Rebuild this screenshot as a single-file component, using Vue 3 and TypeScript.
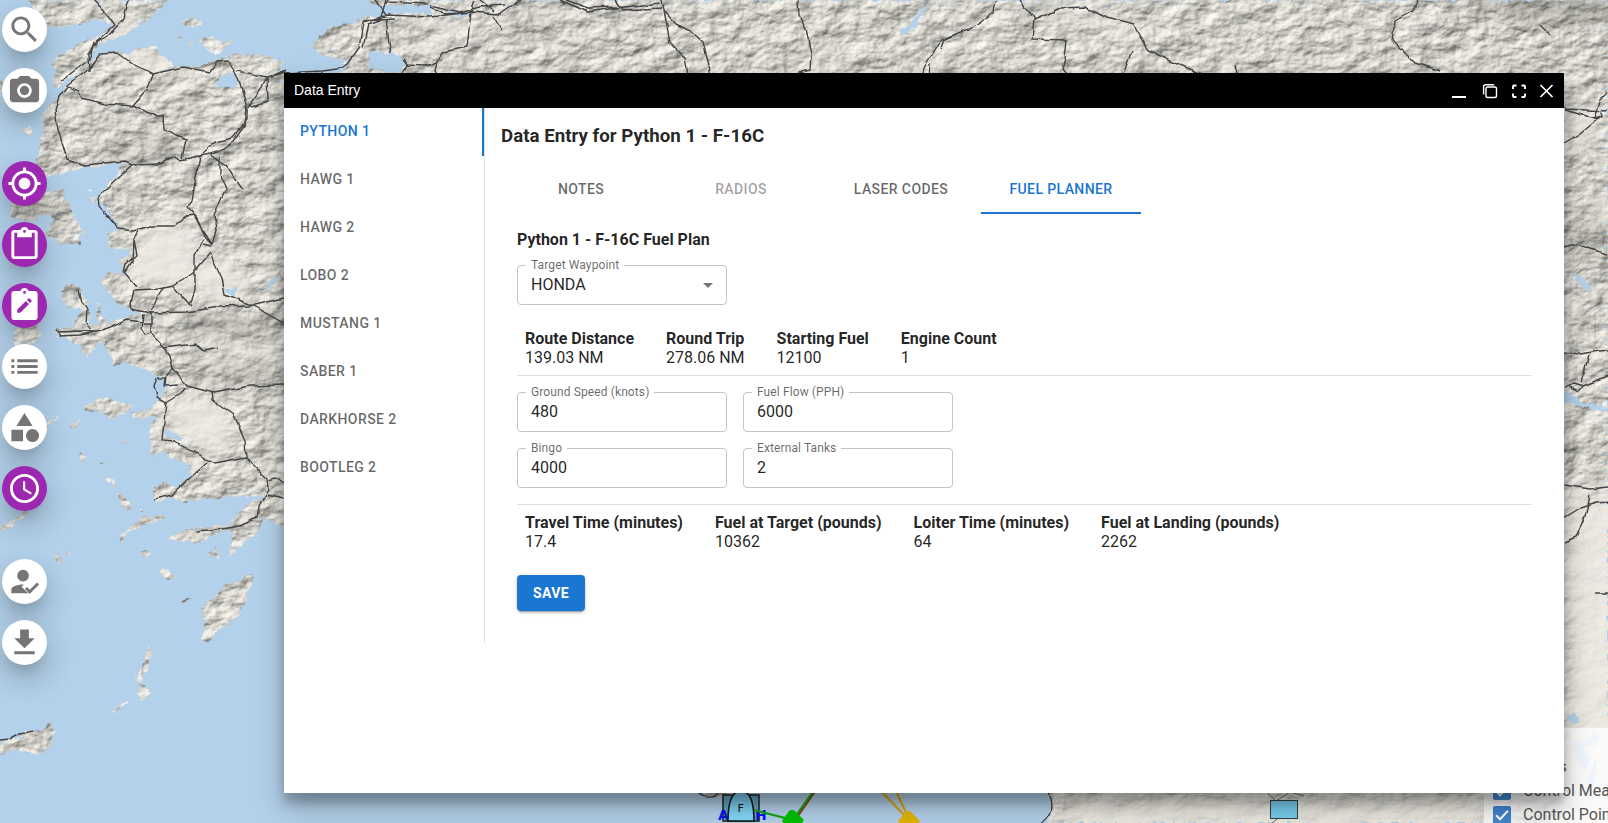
<script setup lang="ts">
import { ref } from 'vue'

interface ToolButton { name: string; accent: boolean; path: string }
interface Stat { label: string; value: string }
interface Field { label: string; value: string }

const toolGroups: ToolButton[][] = [
  [
    { name: 'Search', accent: false, path: 'M15.5 14h-.79l-.28-.27C15.41 12.59 16 11.11 16 9.5 16 5.91 13.09 3 9.5 3S3 5.91 3 9.5 5.91 16 9.5 16c1.61 0 3.09-.59 4.23-1.57l.27.28v.79l5 4.99L20.49 19l-4.99-5zm-6 0C7.01 14 5 11.99 5 9.5S7.01 5 9.5 5 14 7.01 14 9.5 11.99 14 9.5 14z' },
    { name: 'Camera', accent: false, path: 'M12 8.8a3.2 3.2 0 1 0 0 6.4 3.2 3.2 0 0 0 0-6.4zM9 2L7.17 4H4c-1.1 0-2 .9-2 2v12c0 1.1.9 2 2 2h16c1.1 0 2-.9 2-2V6c0-1.1-.9-2-2-2h-3.17L15 2H9zm3 15c-2.76 0-5-2.24-5-5s2.24-5 5-5 5 2.24 5 5-2.24 5-5 5z' },
  ],
  [
    { name: 'Locate', accent: true, path: 'M12 8c-2.21 0-4 1.79-4 4s1.79 4 4 4 4-1.79 4-4-1.79-4-4-4zm8.94 3c-.46-4.17-3.77-7.48-7.94-7.94V1h-2v2.06C6.83 3.52 3.52 6.83 3.06 11H1v2h2.06c.46 4.17 3.77 7.48 7.94 7.94V23h2v-2.06c4.17-.46 7.48-3.77 7.94-7.94H23v-2h-2.06zM12 19c-3.87 0-7-3.13-7-7s3.13-7 7-7 7 3.13 7 7-3.13 7-7 7z' },
    { name: 'Clipboard', accent: true, path: 'M19 2h-4.18C14.4.84 13.3 0 12 0S9.6.84 9.18 2H5c-1.1 0-2 .9-2 2v16c0 1.1.9 2 2 2h14c1.1 0 2-.9 2-2V4c0-1.1-.9-2-2-2zm-7 0c.55 0 1 .45 1 1s-.45 1-1 1-1-.45-1-1 .45-1 1-1zm7 18H5V4h2v3h10V4h2v16z' },
    { name: 'Edit entry', accent: true, path: 'M19 2h-4.18C14.4.84 13.3 0 12 0S9.6.84 9.18 2H5c-1.1 0-2 .9-2 2v16c0 1.1.9 2 2 2h14c1.1 0 2-.9 2-2V4c0-1.1-.9-2-2-2zm-7 0c.55 0 1 .45 1 1s-.45 1-1 1-1-.45-1-1 .45-1 1-1zM9.1 17H7v-2.14l5.96-5.96 2.12 2.12L9.1 17zm7.75-7.73l-1.06 1.06-2.12-2.12 1.06-1.06c.2-.2.51-.2.71 0l1.41 1.41c.2.2.2.51 0 .71z' },
    { name: 'List', accent: false, path: 'M3 13h2v-2H3v2zm0 4h2v-2H3v2zm0-8h2V7H3v2zm4 4h14v-2H7v2zm0 4h14v-2H7v2zM7 7v2h14V7H7z' },
    { name: 'Shapes', accent: false, path: 'M12 2l-5.5 9h11zM17.5 13a4.5 4.5 0 1 0 0 9 4.5 4.5 0 0 0 0-9zM3 13.5h8v8H3z' },
    { name: 'Time', accent: true, path: 'M11.99 2C6.47 2 2 6.48 2 12s4.47 10 9.99 10C17.52 22 22 17.52 22 12S17.52 2 11.99 2zM12 20c-4.42 0-8-3.58-8-8s3.58-8 8-8 8 3.58 8 8-3.58 8-8 8zm.5-13H11v6l5.25 3.15.75-1.23-4.5-2.67z' },
  ],
  [
    { name: 'Assign', accent: false, path: 'M11 4a4 4 0 1 0 0 8 4 4 0 0 0 0-8zM3 20v-2.5C3 15 8 14 11 14h.6L10 15.6 14.6 20zM15.5 20.5l-3.2-3.5 1.4-1.3 1.9 1.9 5-4.9 1.4 1.3z' },
    { name: 'Download', accent: false, path: 'M19 9h-4V3H9v6H5l7 7 7-7zM5 18v2h14v-2H5z' },
  ],
]

const flights = ['Python 1', 'Hawg 1', 'Hawg 2', 'Lobo 2', 'Mustang 1', 'Saber 1', 'Darkhorse 2', 'Bootleg 2']
const activeFlight = ref('Python 1')

const tabs = [
  { label: 'Notes', disabled: false },
  { label: 'Radios', disabled: true },
  { label: 'Laser Codes', disabled: false },
  { label: 'Fuel Planner', disabled: false },
]
const activeTab = ref('Fuel Planner')

const routeStats: Stat[] = [
  { label: 'Route Distance', value: '139.03 NM' },
  { label: 'Round Trip', value: '278.06 NM' },
  { label: 'Starting Fuel', value: '12100' },
  { label: 'Engine Count', value: '1' },
]
const fields: Field[] = [
  { label: 'Ground Speed (knots)', value: '480' },
  { label: 'Fuel Flow (PPH)', value: '6000' },
  { label: 'Bingo', value: '4000' },
  { label: 'External Tanks', value: '2' },
]
const results: Stat[] = [
  { label: 'Travel Time (minutes)', value: '17.4' },
  { label: 'Fuel at Target (pounds)', value: '10362' },
  { label: 'Loiter Time (minutes)', value: '64' },
  { label: 'Fuel at Landing (pounds)', value: '2262' },
]
const layers = ['Control Measures', 'Control Points']

const land: string[] = [
  'M28 0L33 10 47 27 62 26 80 24 95 20 111 22 113 27 100 36 85 41 65 52 50 62 57 72 52 84 58 90 65 80 77 74 88 64 89 57 95 49 100 43 118 38 135 28 150 18 160 8 168 0Z',
  'M0 80L4 84 3 91 0 93Z',
  'M92 60L100 54 118 52 130 54 137 48 155 46 161 54 175 66 200 66 218 60 235 54 262 55 285 60 280 72 300 75 322 72 338 77 347 65 336 58 321 54 311 45 330 27 362 20 368 14 371 4 369 0H1608V823H1048L1052 808 1048 790 900 600 284 527 263 517 258 533 245 543 228 555 233 540 230 528 197 543 168 540 173 535 197 528 230 525 240 510 257 500 267 495 227 497 180 502 173 497 155 503 153 490 163 483 177 487 192 475 187 463 170 460 167 450 152 455 149 430 157 417 133 417 130 413 150 410 160 398 168 385 155 373 148 371 127 363 113 365 103 340 87 356 67 337 52 334 57 328 72 328 78 315 83 310 68 306 62 300 63 287 72 283 79 287 87 302 91 323 100 325 95 316 99 308 106 323 142 313 125 307 115 300 100 280 110 273 123 273 120 263 132 250 110 248 108 233 120 230 108 210 98 197 113 180 123 163 85 167 47 177 35 167 43 133 42 117 47 107 60 97 67 85Z',
  'M12 203L30 194 47 192 63 190 66 200 78 223 87 238 80 232 80 243 65 245 45 234 55 220 47 213 33 222 12 217Z',
  'M181 23L190 18 203 22 193 28Z',
  'M198 38L213 37 233 43 217 54 207 50Z',
  'M22 129L29 127 32 133 28 135Z',
  'M177 39l4-3 1 5zM187 42l5-1 1 4zM86 190l5-1 1 3zM89 197l7-1 1 6-6 1z',
  'M12 339L18 327 38 324 40 335 34 343 15 344Z',
  'M97 303l3 0 1 7-4-1z',
  'M83 406L103 396 115 401 133 405 125 413 109 418 97 410 88 412Z',
  'M40 427L61 413 55 420 46 427Z',
  'M0 527L25 512 33 514 20 519 11 528 0 531Z',
  'M104 477l9 3 3 8-8-6zM117 494l7 2 8 9-1 4-9-2z',
  'M80 454l6 1-3 9-3-3zM99 460l7 3-5 0zM67 425l5 0 8-7-4 14zM121 440l6 1-3 3zM139 508l5 0-2 3z',
  'M119 533L128 530 140 518 163 514 164 518 145 526 128 532 124 543Z',
  'M140 552l6-2 3 5-6 3zM158 570l8-1 8 8-3 3-9-4zM181 600l10-2-4 4-5 1z',
  'M208 552l8-4 2 10-6-3zM52 554l8 1 2 7-5 2zM64 548l7 6-6-1z',
  'M252 573L242 578 228 583 218 592 200 610 206 620 203 638 207 643 225 624 238 618 244 602 254 581Z',
  'M148 644l4 8-3 13-8 17 6 8 5 3-10 9-4-3 3-14-6-7 7-10z',
  'M112 710l15-8 1 2-13 8z',
  'M0 742L15 738 30 730 43 732 51 721 54 733 50 748 38 754 12 750 0 754Z',
  'M700 788h37l-8 7-9 2-9-1-6 1z',
]

const water: string[] = [
  'M368 4L385 6 430 5 430 14 400 13 385 16 367 16Z',
  'M368 53L381 52 400 55 407 65 399 72 384 72 370 67Z',
  'M214 87L220 76 230 73 237 78 236 88 225 86Z',
  'M445 10l20 0 5 6-11 1zM277 79l7 -1v7zM165 429l18 8-4 3-13-3z',
  'M262 291l4-7 12-9-5 10-7 5zM224 289l14-1-3 6-10-1z',
  'M899 32l10-7 10-14 10-8-6 12-8 12-7 5-8 3z',
  'M1573 272l10 6 8 6-2 7-9-5zM1564 390l20 12 24 6v3l-28-5-16-4zM1566 716l8-3 5 4-1 9-5-1z',
  'M1571 745l9-6 8 3 6-10 6 4-6 10-10 1 6 14-4 9-10-12zM1592 765l6-5-3 15-6 20-3-2z',
]

const roads: string[] = [
  'M94 0L107 14 115 25 100 38 94 43 89 60 62 80 M129 0L124 18 118 25 110 34 98 41 88 54 89 72',
  'M67 86L59 97 55 110 58 130 63 146 67 159 85 165 125 161 135 165 158 164 175 156 180 160 219 152 233 142 245 125 247 108 239 80 229 61 217 62 210 72 183 67 153 74 130 62 118 53 100 54 88 70 67 86',
  'M153 74L147 90 133 106 158 116 164 116 165 130 175 136 186 140 182 158 M68 87L79 91 81 98 105 104 133 106',
  'M133 164L113 182 98 197 99 206 110 218 119 229 133 231 150 226 174 226 186 216 194 215 202 230 212 245 216 230 214 215 226 189 220 174 220 155 M200 156L192 200 188 208 197 218 205 238 212 246',
  'M210 155L227 166 236 180 243 190 M237 71L267 77 286 70 M267 77L268 102 250 107 M202 154L215 142 233 138 247 120 247 108 260 90 267 77 286 72',
  'M210 253L222 278 225 294 253 306 289 326 M210 253L194 272 174 286 153 290 133 291 130 304 131 309 150 313 186 312 220 307 250 306 284 298 M204 240L195 254 195 290 189 305 M164 287L156 300 151 311 M174 287L191 306 M203 245l8 2',
  'M139 229L133 240 136 255 126 264 124 272 137 287 M133 240l-1 22-7 10 M56 330L61 336 80 335 100 331 128 320 142 322 143 314 M58 332l25-1 12 1 M151 312L151 333 160 342 170 356 173 368 181 378 187 386 214 393 250 386 284 385 M143 314l-2 15 4 6 6-2 M143 324h8 M164 348L195 344 203 351 218 348',
  'M157 377L154 386 157 397 167 402 180 394 184 388 M173 368L165 376 164 386 178 385 M165 377l-7 0 M166 402L162 440 175 441 190 449 208 460 215 464 246 458 245 440 234 415 213 400 212 392',
  'M208 462L190 478 172 495 154 499 M246 458L267 478 268 490 259 505 257 518 240 526 210 531 195 532 M267 495L284 499 M267 480l9-2 8 6',
  'M79 290l3 12 5 8-1 12 5 8 M0 740L10 739 20 734 33 731',
  'M284 73L322 71 338 69 348 63 359 48 363 22 388 15 430 17 471 12 475 0 M386 15L375 0 M322 72L326 92 M343 91L335 87 320 88 M363 48l5-24 12-4 6-20 M363 20L395 18 M388 0L386 4 M388 2l40 2 M430 7L446 14 470 12 500 14 520 0 M430 5L460 12 480 7 505 5 M480 0L495 11 M494 16L502 29 M471 12L467 47 442 52 435 70 443 84 438 94 M386 18l3 25 2 10 M403 60L407 65 425 66 438 63 M407 65l-5 12-1 14',
  'M560 0L588 12 615 8 660 3 M566 0l22 8 28-1 M615 0L622 10 662 8 M662 0L670 42 685 58 691 92 M665 12L676 24 692 32 703 42 709 65 713 93',
  'M798 0L799 15 806 28 811 55 810 69 799 72 790 94 M959 33L940 41 925 66 914 92 M930 64L928 94',
  'M996 0L994 12 970 29 956 34 944 40 940 50 M1020 0L1034 18 1032 39 1067 40 1065 58 1062 70 1070 80 1088 85 1112 79 1124 72 1132 50 M1034 20L1048 14 1060 8 1085 7 1107 18 1133 25 1148 50 1175 63 1200 73 1250 92',
  'M1418 0L1411 12 1395 21 1392 40 1415 63 1440 71 M1451 75L1472 79 1490 94 M1538 23l12 12 M1236 65l6 23 M1108 80v14',
  'M1564 109L1608 111 M1564 110L1598 119 1580 134 1564 143 M1608 92L1600 100 1594 117 1602 118 1601 112 M1564 247L1576 244 1590 249 1608 254 M1564 352L1580 354 1608 350 M1589 355L1580 382 M1564 388L1573 383 1583 386 1578 391 1570 386 M1583 386L1608 376 M1564 485L1590 489 1608 487 M1564 518L1580 508 1596 503 1608 502 M1564 543L1576 538 1586 513 1590 496 M1595 593h13',
]
</script>

<template>
  <div class="app">
    <svg class="map" viewBox="0 0 1608 823" width="1608" height="823" aria-hidden="true">
      <defs>
        <filter id="relief" x="0" y="0" width="100%" height="100%" color-interpolation-filters="sRGB">
          <feTurbulence type="fractalNoise" baseFrequency="0.042 0.062" numOctaves="4" seed="11" result="n" />
          <feColorMatrix in="n" type="matrix" values="0 0 0 0 0  0 0 0 0 0  0 0 0 0 0  1 0 0 0 0" />
          <feDiffuseLighting surfaceScale="3.6" diffuseConstant="1.07" lighting-color="#edebe3">
            <feDistantLight azimuth="225" elevation="55" />
          </feDiffuseLighting>
        </filter>
        <filter id="soft" x="-20%" y="-20%" width="140%" height="140%"><feGaussianBlur stdDeviation="10" /></filter>
        <filter id="rough" filterUnits="userSpaceOnUse" x="0" y="0" width="1608" height="823">
          <feTurbulence type="fractalNoise" baseFrequency="0.14" numOctaves="3" seed="4" />
          <feDisplacementMap in="SourceGraphic" scale="7" xChannelSelector="R" yChannelSelector="G" />
        </filter>
        <filter id="wobble" filterUnits="userSpaceOnUse" x="0" y="0" width="1608" height="823">
          <feTurbulence type="fractalNoise" baseFrequency="0.07" numOctaves="2" seed="7" />
          <feDisplacementMap in="SourceGraphic" scale="5" xChannelSelector="R" yChannelSelector="G" />
        </filter>
        <mask id="landmask" maskUnits="userSpaceOnUse" x="0" y="0" width="1608" height="823">
          <g filter="url(#rough)"><path v-for="(d, i) in land" :key="i" :d="d" fill="#fff" /></g>
        </mask>
        <mask id="hills" maskUnits="userSpaceOnUse" x="0" y="0" width="1608" height="823">
          <rect width="1608" height="823" fill="#e4e4e4" />
          <g filter="url(#soft)" fill="#1c1c1c">
            <path d="M150 220h40l15 60-30 15-60-20zM200 255l35 10 20 40-50 5zM165 395h60l15 40-30 20-45-25zM100 30l40-20 10 10-40 30zM120 50h50l30 18-70 5zM185 345h99v15h-90z" />
            <path d="M440 20l30-10 30-20-80 70zM1000-10l50 5 80 30 20 40-30-30-90-30zM1570 110h30v25l-36 20zM1564 490h90v360h-90zM1590 200h30v25h-30z" />
            <path d="M1060 795h430v40h-430z" />
          </g>
          <g filter="url(#soft)" fill="#fff">
            <path d="M90 140l90-10 10 25-120 8zM160 320l130-10v30l-100-5zM170 365h114v25h-90zM1370-10h250v60h-200zM1564 230h60v40h-60z" />
          </g>
        </mask>
        <linearGradient id="site" x1="0" y1="0" x2="0" y2="1">
          <stop offset="0" stop-color="#7cc5ea" /><stop offset="1" stop-color="#82dcfb" />
        </linearGradient>
      </defs>
      <rect width="1608" height="823" fill="#b3d1ea" />
      <g mask="url(#landmask)">
        <rect width="1608" height="823" fill="#edebe3" />
        <g mask="url(#hills)">
          <rect width="1608" height="823" filter="url(#relief)" />
        </g>
        <g filter="url(#soft)" fill="#4c4b45" opacity=".3">
          <path d="M100 150l75-15 10 15-80 8zM170 318l114 0v14l-100 2zM180 370l104 0v12l-80 2zM510 22l40-6 10 8-50 6zM1440-5h180v30l-100-4zM1020 8l40-8 10 5-40 12zM1574 225h40v30h-40zM20 205h30l20 25h-25z" />
        </g>
      </g>
      <g filter="url(#rough)"><path v-for="(d, i) in water" :key="i" :d="d" fill="#b3d1ea" /></g>
      <g filter="url(#wobble)" fill="none" stroke="#444" stroke-width="1.4" stroke-linejoin="round">
        <path v-for="(d, i) in roads" :key="i" :d="d" />
        <path d="M1047 790c5 12 7 26-6 33M700 793c6 5 14 3 18 1" />
      </g>
      <g class="units">
        <rect x="723" y="795" width="36" height="26" fill="#64a7c4" stroke="#222" stroke-width="1.5" />
        <text x="718" y="820" class="unit-name">A</text>
        <text x="755" y="820" class="unit-name">H</text>
        <path d="M728 821c0-20 4-30 13-30s13 10 13 30z" fill="url(#site)" stroke="#111" stroke-width="1.5" />
        <text x="737.5" y="812" class="unit-letter">F</text>
        <path d="M815 791l-18 26" stroke="#b23025" stroke-width="2.4" />
        <path d="M813 792l-20 28-39-10" fill="none" stroke="#14a514" stroke-width="2.2" />
        <path d="M782 821l7-10q3-2 6 0l9 9-2 3h-19z" fill="#00c200" />
        <path d="M881 791l26 27M896 791l12 26" fill="none" stroke="#d9a60b" stroke-width="2.2" />
        <path d="M898 821l8-9q3-2 5 0l9 9-2 2h-19z" fill="#e2b400" />
        <path d="M1272 823l10-8M1264 790l12 11 14-9 14 4" fill="none" stroke="#666" />
        <rect x="1270.5" y="800.5" width="27" height="18" fill="#78cdee" stroke="#344" />
      </g>
    </svg>

    <aside class="legend">
      <div class="legend-title">Layers</div>
      <div v-for="layer in layers" :key="layer" class="legend-row">
        <span class="check"><svg viewBox="0 0 18 18" width="18" height="18"><path d="M3 9.2l4 4 8-8.4" fill="none" stroke="#fff" stroke-width="2" /></svg></span>
        <span>{{ layer }}</span>
      </div>
    </aside>

    <nav class="toolbar">
      <div v-for="(group, g) in toolGroups" :key="g" class="tool-group">
        <button v-for="tool in group" :key="tool.name" class="fab" :class="{ accent: tool.accent }" :aria-label="tool.name">
          <svg viewBox="0 0 24 24"><path :d="tool.path" /></svg>
        </button>
      </div>
    </nav>

    <section class="window">
      <header class="titlebar">
        <span class="title">Data Entry</span>
        <svg class="controls" width="104" height="16" viewBox="0 0 104 16" fill="none" stroke="#fff">
          <path d="M1 14h14" stroke-width="2" />
          <rect x="35" y="4" width="10.5" height="10.5" rx="1.8" stroke-width="1.4" />
          <path d="M32.6 11.5V3.8q0-2 2-2h8.6" stroke-width="1.4" />
          <path d="M62 6V3.5q0-1 1-1h2.5M70.5 2.5H73q1 0 1 1V6M74 10.5V13q0 1-1 1h-2.5M65.5 14H63q-1 0-1-1v-2.5" stroke-width="1.9" />
          <path d="M89.5 2l12 12M101.5 2l-12 12" stroke-width="1.7" />
        </svg>
      </header>
      <div class="content">
        <div class="flights">
          <button v-for="f in flights" :key="f" class="flight" :class="{ active: f === activeFlight }" @click="activeFlight = f">{{ f }}</button>
        </div>
        <main class="main">
          <h2>Data Entry for Python 1 - F-16C</h2>
          <div class="tabs">
            <button v-for="t in tabs" :key="t.label" class="tab" :class="{ active: t.label === activeTab }" :disabled="t.disabled" @click="activeTab = t.label">{{ t.label }}</button>
          </div>
          <div class="panel">
            <h3>Python 1 - F-16C Fuel Plan</h3>
            <div class="field">
              <label>Target Waypoint</label>
              <span>HONDA</span>
              <svg class="arrow" viewBox="0 0 24 24" width="24" height="24"><path d="M7 10l5 5 5-5z" fill="#757575" /></svg>
            </div>
            <div class="stats">
              <div v-for="s in routeStats" :key="s.label"><b>{{ s.label }}</b><div>{{ s.value }}</div></div>
            </div>
            <div class="fields">
              <div v-for="f in fields" :key="f.label" class="field"><label>{{ f.label }}</label><span>{{ f.value }}</span></div>
            </div>
            <div class="stats results">
              <div v-for="s in results" :key="s.label"><b>{{ s.label }}</b><div>{{ s.value }}</div></div>
            </div>
            <button class="save">Save</button>
          </div>
        </main>
      </div>
    </section>
  </div>
</template>

<style>
body { margin: 0; overflow: hidden; }
</style>

<style scoped>
.app { position: relative; width: 1608px; height: 823px; overflow: hidden; font-family: Roboto, "Liberation Sans", sans-serif; font-size: 16px; color: rgba(0, 0, 0, .87); }
.app * { box-sizing: border-box; }
button { border: 0; background: none; font: inherit; padding: 0; cursor: pointer; }
.map { position: absolute; inset: 0; display: block; }
.unit-name { font: bold 14px "DejaVu Sans", sans-serif; fill: #0a14f0; }
.unit-letter { font: 11px "DejaVu Sans", sans-serif; fill: #111; }

.legend { position: absolute; left: 1484px; top: 728px; width: 190px; height: 110px; padding: 27px 0 0 9px; background: rgba(255, 255, 255, .8); color: #555; }
.legend-title { height: 24px; line-height: 24px; padding-left: 27px; }
.legend-row { display: flex; align-items: center; gap: 12px; height: 24px; line-height: 24px; white-space: nowrap; }
.check { width: 18px; height: 18px; border-radius: 2px; background: #4285cf; }
.check svg { display: block; }

.toolbar { position: absolute; left: 2px; top: 7px; display: flex; flex-direction: column; gap: 48px; }
.tool-group { display: flex; flex-direction: column; gap: 16px; }
.fab { width: 45px; height: 45px; border-radius: 50%; background: #fff; display: flex; align-items: center; justify-content: center; box-shadow: 0 11px 15px -7px rgba(0, 0, 0, .2), 0 14px 28px 3px rgba(0, 0, 0, .12), 0 9px 36px 4px rgba(0, 0, 0, .06); }
.fab svg { width: 35px; height: 35px; fill: #757575; }
.fab.accent { background: #9c27b0; }
.fab.accent svg { fill: #fff; }

.window { position: absolute; left: 284px; top: 73px; width: 1280px; height: 720px; display: flex; flex-direction: column; background: #fff; box-shadow: 0 14px 28px rgba(0, 0, 0, .25), 0 10px 10px rgba(0, 0, 0, .22); }
.titlebar { display: flex; align-items: center; justify-content: space-between; height: 35px; padding: 0 9px 0 10px; background: #000; color: #fff; font: 14px "Liberation Sans", Arial, sans-serif; }
.title { line-height: 35px; height: 35px; }
.content { display: flex; align-items: flex-start; flex: 1; }
.flights { width: 201px; height: 535px; border-right: 1px solid #e0e0e0; display: flex; flex-direction: column; }
.flight, .tab { height: 48px; font-size: 14px; font-weight: 500; letter-spacing: .4px; text-transform: uppercase; color: rgba(0, 0, 0, .6); }
.flight { text-align: left; padding: 0 0 2px 16px; line-height: 46px; border-right: 2px solid transparent; }
.flight.active { color: #1976d2; border-color: #1976d2; }
.main { flex: 1; padding: 0 16px; }
h2 { margin: 0; height: 58px; line-height: 57px; font-size: 18.72px; font-weight: 700; }
h3 { margin: 0 0 16px; height: 19px; line-height: 19px; font-size: 16px; font-weight: 700; }
.tabs { display: flex; }
.tab { width: 160px; border-bottom: 2px solid transparent; }
.tab:disabled { color: rgba(0, 0, 0, .38); }
.tab.active { color: #1976d2; border-color: #1976d2; }
.panel { padding: 16px; }
.field { position: relative; width: 210px; height: 40px; border: 1px solid #c4c4c4; border-radius: 4px; padding: 0 13px 1px; display: flex; align-items: center; justify-content: space-between; line-height: 37px; }
.field label { position: absolute; left: 8px; top: -9px; padding: 0 5px; background: #fff; font-size: 12px; line-height: 16px; color: rgba(0, 0, 0, .6); letter-spacing: .11px; white-space: nowrap; }
.arrow { margin-right: -7px; }
.stats { display: flex; gap: 32px; margin-top: 16px; padding: 8px; border-bottom: 1px solid #e0e0e0; line-height: 19px; }
.stats b { display: block; font-weight: 700; }
.fields { display: grid; grid-template-columns: 210px 210px; gap: 16px; padding: 16px 0; }
.results { margin: 0; border-top: 1px solid #e0e0e0; border-bottom: 0; }
.save { display: block; margin-top: 16px; height: 36px; padding: 0 16px 1px; border-radius: 4px; background: #1976d2; color: #fff; font-size: 14px; font-weight: 700; letter-spacing: .4px; text-transform: uppercase; box-shadow: 0 3px 1px -2px rgba(0, 0, 0, .2), 0 2px 2px rgba(0, 0, 0, .14), 0 1px 5px rgba(0, 0, 0, .12); }
</style>
